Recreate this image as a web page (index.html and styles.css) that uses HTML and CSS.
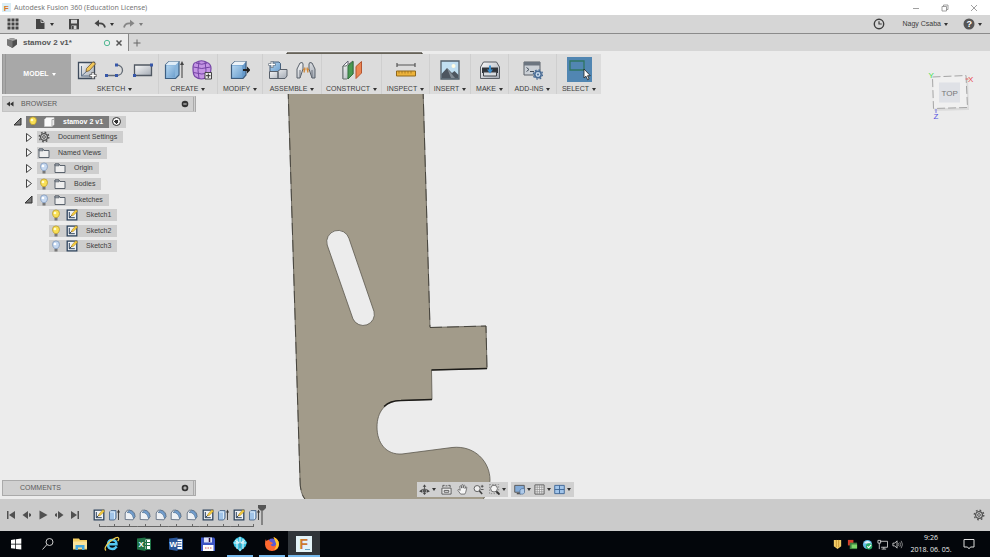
FILE: index.html
```html
<!DOCTYPE html>
<html lang="en">
<head>
<meta charset="utf-8">
<title>Autodesk Fusion 360 (Education License)</title>
<link rel="stylesheet" href="styles.css">
</head>
<body>
<svg class="defs" aria-hidden="true">
  <defs>
    <linearGradient id="blue" x1="0" y1="0" x2="1" y2="1"><stop offset="0" stop-color="#b5d6f0"/><stop offset="1" stop-color="#6c9fce"/></linearGradient>
    <linearGradient id="steel" x1="0" y1="0" x2="1" y2="1"><stop offset="0" stop-color="#fafafa"/><stop offset="1" stop-color="#a3aab4"/></linearGradient>
  </defs>
  <symbol id="i-sketch" viewBox="0 0 20 20"><path d="M1.500 2.500h16v16h-16z" fill="url(#steel)" stroke="#3e4b5c" stroke-width="1.300"/><path d="M4.500 6v10h9M4.500 16l9-8" fill="none" stroke="#61748c"/><path d="M9.500 8.500 16 1.800l2.600 2-6.300 6.900-3.300 1z" fill="#f1c85a" stroke="#705735" stroke-width=".8"/><path d="M16 12v7M12.500 15.500h7" stroke="#555" stroke-width="3"/><path d="M16 12.700v5.600M13.200 15.500h5.600" stroke="#fff" stroke-width="1.500"/></symbol>
  <symbol id="i-line" viewBox="0 0 20 20"><path d="M1.500 15.500h10c8 0 8-10.500 0-10.500" fill="none" stroke="#636b75" stroke-width="1.300"/><path d="M0 14h3v3H0zM10 14h3v3h-3zM10 3.500h3v3h-3z" fill="#3757a8"/></symbol>
  <symbol id="i-rect" viewBox="0 0 20 20"><path d="M1.500 5h17v10.500h-17z" fill="url(#steel)" stroke="#505862" stroke-width="1.300"/><path d="M0 14h3v3H0zM17 3.500h3v3h-3z" fill="#3757a8"/></symbol>
  <symbol id="i-box" viewBox="0 0 20 20"><path d="M1.500 5 5 1.500h10V15l-3.500 3.500h-10z" fill="#8ab6dc" stroke="#3e6083" stroke-width="1.200"/><path d="M1.500 5 5 1.500h10L11.500 5z" fill="#e0edf7"/><path d="M2.500 5.500h8.500v12H2.500z" fill="url(#blue)"/><path d="M18 18V3" stroke="#555" stroke-width="1.200"/><path d="m16 5 2-4 2 4z" fill="#444"/></symbol>
  <symbol id="i-form" viewBox="0 0 20 20"><path d="M4 2.500Q9.500-1 15 2.500q4 1.500 4 6t-2 8q-8 5-14 0-2-2-2-8t3-6z" fill="#c495e4" stroke="#7544a6" stroke-width="1.200"/><path d="M1.500 7q8 3 17 0M1.500 12.500q8 3 17 0M7 1.500q-2 9 0 17M13 1.500q2 9 0 17M4 3q6 2.500 11 0" fill="none" stroke="#7544a6"/><path d="M13 12.500h6.500v6.500H13z" fill="#eee" stroke="#444"/><path d="M14 15.700h4.500M16.300 13.500v4.500" stroke="#333"/></symbol>
  <symbol id="i-press" viewBox="0 0 20 20"><path d="M1.500 5 5 1.500h11V15l-3 3.500H1.500z" fill="#669acb" stroke="#3e5c7c" stroke-width="1.200"/><path d="M1.500 5 5 1.500h11L13 5z" fill="#edf3f8"/><path d="M2.200 5.500h10v12h-10z" fill="url(#blue)"/><path d="M13 9h4V6.500l3.500 3.500-3.500 3.500V11h-4z" fill="#222"/></symbol>
  <symbol id="i-newcomp" viewBox="0 0 20 20"><path d="m2 5 3-3h6l1.500 1.500V9L10 11.500H2z" fill="url(#blue)" stroke="#48617c"/><path d="M1.500 11.500h8.500v7H1.500zM10 11.500l2-2h7v6.500l-2 2.500h-7z" fill="url(#steel)" stroke="#59616b"/><path d="M4 1v7M.500 4.500h7" stroke="#4b5969" stroke-width="2.600"/><path d="M4 1.500v6M1 4.500h6" stroke="#fff" stroke-width="1.300"/></symbol>
  <symbol id="i-joint" viewBox="0 0 20 20"><path d="m1 9 3-6q3-1.500 3 1v5l-3 9H1zM19 9l-3-6q-3-1.500-3 1v5l3 9h3z" fill="url(#steel)" stroke="#59616b"/><path d="M4 10v8M16 10v8" stroke="#6c737c"/><path d="M7 9.500h2.500M10.500 9.500H13M8 12.500l1-5M12 12.500l-1-5" stroke="#d0893a" stroke-width="1.300"/></symbol>
  <symbol id="i-plane" viewBox="0 0 20 20"><path d="m1 6 5-5v13l-5 5z" fill="#f7f7f7" stroke="#667"/><path d="m4 6 7-5v13l-6.500 5H1V6z" fill="url(#steel)" stroke="#65716b"/><path d="m6 6 5-4.500V14l-5 5z" fill="#4a9a52" stroke="#31713c"/><path d="m14 6.500 5.500-5V13L14 18.500z" fill="#ec8552" stroke="#b55530"/></symbol>
  <symbol id="i-measure" viewBox="0 0 20 20"><path d="M1 5h18M1 3v4M19 3v4" stroke="#555" stroke-width="1.200"/><path d="M.500 11h19v5H.500z" fill="#edb33a" stroke="#90681c"/><path d="M3 11v2.500m3-2.500v2.500m3-2.500v2.500m3-2.500v2.500m3-2.500v2.500" stroke="#90681c" stroke-width=".7"/></symbol>
  <symbol id="i-image" viewBox="0 0 20 20"><path d="M1 1h18v18H1z" fill="#c0dff1" stroke="#53616c" stroke-width="1.300"/><circle cx="13.500" cy="6" r="2" fill="#fffde4"/><path d="m1.500 14 5.500-6 5 5 2.500-2 4 4v3.500h-17z" fill="#4d5660"/><path d="m7 8 8 10h-4z" fill="#818b94"/></symbol>
  <symbol id="i-make" viewBox="0 0 20 20"><path d="M3.500 2h13l3 5v11.500H.500V7z" fill="url(#steel)" stroke="#5a5f65"/><path d="M2 7.500h16V13H2z" fill="#30353b"/><path d="M3.500 12h13v4h-13z" fill="#d8dce0" stroke="#40454b"/><path d="M10 5.500v5" stroke="#3b8fd0" stroke-width="2"/><path d="m7 9.500 3 4 3-4z" fill="#3b8fd0"/></symbol>
  <symbol id="i-addin" viewBox="0 0 20 20"><path d="M1 2h16v13H1z" fill="#cbd0d6" stroke="#5b6168"/><path d="M1 2h16v3.500H1z" fill="#6c7580"/><path d="m3.500 7.500 2.500 2-2.500 2M7 11.500h4" fill="none" stroke="#44505d"/><circle cx="15" cy="14.500" r="3.200" fill="#c5d8eb" stroke="#486b94" stroke-width="1.500"/><circle cx="15" cy="14.500" r="4.600" fill="none" stroke="#486b94" stroke-width="1.300" stroke-dasharray="1.700 1.900"/><circle cx="15" cy="14.500" r="1" fill="#486b94"/></symbol>
  <symbol id="i-select" viewBox="0 0 25 25"><path d="M3 4h14v9H3z" fill="none" stroke="#2f7561" stroke-width="1.300"/><path d="M17 12v9l2-1.800 1.600 3.600 1.500-.8-1.600-3.300h2.800z" fill="#fff" stroke="#222" stroke-width=".8"/></symbol>
  <symbol id="i-bulb-on" viewBox="0 0 12 12"><path d="M4.500 8.500Q2.500 6.500 2.500 4.400a3.500 3.500 0 0 1 7 0q0 2.100-2 4.100z" fill="#f9df54" stroke="#b99a2c" stroke-width=".8"/><circle cx="5" cy="4" r="1.300" fill="#fffbd0"/><path d="M4.500 9h3v2.500h-3z" fill="#777"/></symbol>
  <symbol id="i-bulb-off" viewBox="0 0 12 12"><path d="M4.500 8.500Q2.500 6.500 2.500 4.400a3.500 3.500 0 0 1 7 0q0 2.100-2 4.100z" fill="#c5d8f0" stroke="#7f98bd" stroke-width=".8"/><circle cx="5" cy="4" r="1.300" fill="#fff"/><path d="M4.500 9h3v2.500h-3z" fill="#777"/></symbol>
  <symbol id="i-folder" viewBox="0 0 12 12"><path d="M1 2h4l1 1.500h5v7H1z" fill="#eee" stroke="#4d5661" stroke-width=".9"/><path d="M1 2h4v1.800H1z" fill="#aab0b7" stroke="#4d5661" stroke-width=".7"/></symbol>
  <symbol id="i-cubew" viewBox="0 0 12 12"><path d="M1.500 3.500 3.500 1.500H11V8.500l-2 2H1.500z" fill="#fafafa" stroke="#ccc" stroke-width=".7"/><path d="M9 3.500h2M9 3.500v7" stroke="#aaa"/></symbol>
  <symbol id="i-gear" viewBox="0 0 12 12"><circle cx="6" cy="6" r="3.400" fill="none" stroke="#505050" stroke-width="1.300"/><circle cx="6" cy="6" r="4.800" fill="none" stroke="#505050" stroke-width="1.300" stroke-dasharray="1.700 2.070"/><circle cx="6" cy="6" r="1.400" fill="none" stroke="#505050" stroke-width=".9"/></symbol>
  <symbol id="i-sk" viewBox="0 0 12 12"><path d="M1.200 1.200h9.600v9.600H1.200z" fill="#eef1f4" stroke="#2e445e" stroke-width="1.300"/><path d="M3.300 3v5.700h5.500M3.300 8.700l4-4" fill="none" stroke="#2e445e"/><path d="m5.300 7 .7-2L9.800.700l1.900 1.400L7.500 6.200z" fill="#f6ce3c" stroke="#a07721" stroke-width=".5"/></symbol>
  <symbol id="i-ext" viewBox="0 0 12 12"><path d="M1.500 3 3 1.500h5V9L6.500 11h-5z" fill="#a1c4e8" stroke="#506c8c" stroke-width=".9"/><path d="M2 3h4.500v7" fill="none" stroke="#dcecf9"/><path d="M10.500 11V2.500" stroke="#444"/><path d="m9 3.500 1.500-3 1.500 3z" fill="#333"/></symbol>
  <symbol id="i-fil" viewBox="0 0 12 12"><path d="M1.200 10.500V4l2-2.800h2.600Q11 2 11 7.500L9 10.800z" fill="#eef1f5" stroke="#637082" stroke-width=".9"/><path d="M3 3.500q5-.5 6.500 6l1.300-2Q10 2 5.500 1.300z" fill="#739fd0" stroke="#496989" stroke-width=".6"/></symbol>
  <symbol id="i-open" viewBox="0 0 9 9"><path d="M8 1v7H1z" fill="#777" stroke="#333"/></symbol>
  <symbol id="i-closed" viewBox="0 0 9 9"><path d="M2.500.500 7.500 4.500 2.500 8.500z" fill="#f5f5f5" stroke="#444"/></symbol>
</svg>

<header class="titlebar">
  <svg class="logo" viewBox="0 0 10 10"><path d="M0 0h10v10H0z" fill="#d9edf6"/><text x="2" y="9" class="logo-f">F</text></svg>
  <span class="title">Autodesk Fusion 360 (Education License)</span>
  <div class="winbtns">
    <button aria-label="Minimize"><svg viewBox="0 0 8 8"><path d="M1 4.500h6"/></svg></button>
    <button aria-label="Restore"><svg viewBox="0 0 8 8"><path d="M1 2.500h4.500V7H1zM2.500 2.500V1H7v4.500H5.500"/></svg></button>
    <button aria-label="Close"><svg viewBox="0 0 8 8"><path d="m1 1 6 6M7 1 1 7"/></svg></button>
  </div>
</header>

<nav class="appbar" aria-label="Application">
  <button aria-label="Data panel" class="ab-grid"><svg viewBox="0 0 12 12"><path d="M.500.500h3v3h-3zm4 0h3v3h-3zm4 0h3v3h-3zm-8 4h3v3h-3zm4 0h3v3h-3zm4 0h3v3h-3zm-8 4h3v3h-3zm4 0h3v3h-3zm4 0h3v3h-3z" fill="#444"/></svg></button>
  <button aria-label="File" class="caret"><svg viewBox="0 0 12 12"><path d="M2 1h5l3.500 3.500V11H2z" fill="#444"/><path d="M7 1v3.500h3.500" fill="none" stroke="#ddd" stroke-width=".8"/></svg></button>
  <button aria-label="Save"><svg viewBox="0 0 12 12"><path d="M1 1h10v10.300H1z" fill="#444"/><path d="M3 1.800h6v3.700H3zM3.500 7.500h5V11h-5z" fill="#d5d5d5"/><path d="M4 8h1.700v3H4z" fill="#444"/></svg></button>
  <button aria-label="Undo" class="caret"><svg viewBox="0 0 12 12"><path d="M4 5.500q6-1 7 4" fill="none" stroke="#444" stroke-width="1.800"/><path d="M.500 5.300 5 1.800v7z" fill="#444"/></svg></button>
  <button aria-label="Redo" class="caret faded"><svg viewBox="0 0 12 12"><path d="M8 5.500q-6-1-7 4" fill="none" stroke="#444" stroke-width="1.800"/><path d="M11.500 5.300 7 1.800v7z" fill="#444"/></svg></button>
  <div class="account">
    <button aria-label="Job status"><svg viewBox="0 0 12 12"><circle cx="6" cy="6" r="4.700" fill="none" stroke="#3d3d3d" stroke-width="1.400"/><path d="M6 3.200V6h2.800" fill="none" stroke="#3d3d3d" stroke-width="1.200"/></svg></button>
    <button class="caret user">Nagy Csaba</button>
    <button aria-label="Help" class="caret"><svg viewBox="0 0 12 12"><circle cx="6" cy="6" r="5.500" fill="#555"/><text x="3.500" y="9.200" class="q">?</text></svg></button>
  </div>
</nav>

<div class="tabs">
  <div class="tab">
    <svg class="ic" viewBox="0 0 12 12"><path d="m1 2.500 5-1.500 5 1.500v5L6.500 11 1 8z" fill="#4e4e4e"/><path d="m1 2.500 5.500 1.500L11 2.500 6 1z" fill="#a2a2a2"/><path d="M6.500 4v7L1 8V2.500z" fill="#777"/></svg>
    <strong>stamov 2 v1*</strong>
    <svg class="sync" viewBox="0 0 8 8"><circle cx="4" cy="4" r="2.700" fill="none" stroke="#53b994"/></svg>
    <button aria-label="Close tab"><svg viewBox="0 0 8 8"><path d="m1.500 1.500 5 5M6.500 1.500l-5 5" stroke="#555" stroke-width="1.500"/></svg></button>
  </div>
  <button class="newtab" aria-label="New tab"><svg viewBox="0 0 8 8"><path d="M4 .500v7M.500 4h7" stroke="#666"/></svg></button>
</div>

<main class="viewport">
  <svg class="model" viewBox="0 51 990 448" preserveAspectRatio="xMinYMin slice" role="img" aria-label="Part, top view">
    <path fill-rule="evenodd" d="M287 53H422L430 327.500 486 326 487 368.500 431.500 370 432 399.500 401 400.500C385 401 377 412 377 427C377 443 386 455 402 454L452 447.500C475 445 490 462 490 480Q490 490 483 499.500H305Q300 493 300 480ZM327.200 245A11.200 11.200 0 0 1 349 238.500L374 311.500A11.200 11.200 0 0 1 353 319Z" fill="#a29b8a" stroke="#5c584e" stroke-width=".8"/>
    <path d="M287 53H422" fill="none" stroke="#4a473f" stroke-width="1.200"/>
    <path d="M422 53l8 274M287 53l13 427q0 13 5 19M430 327.500l56-1.500 1 42.500" fill="none" stroke="#34322d" stroke-width=".7" stroke-dasharray="12 5"/>
    <path d="m487 368.500-55.500 1.500M432 399.500l-31 1q-11 0-17 6" fill="none" stroke="#1c1b18" stroke-width="1.300"/>
  </svg>

  <div class="toolbar" role="toolbar" aria-label="Model tools">
    <button class="workspace caret">MODEL</button>
    <div class="group"><div class="icons"><svg><use href="#i-sketch"/></svg><svg><use href="#i-line"/></svg><svg><use href="#i-rect"/></svg></div><button class="caret">SKETCH</button></div>
    <div class="group"><div class="icons"><svg><use href="#i-box"/></svg><svg><use href="#i-form"/></svg></div><button class="caret">CREATE</button></div>
    <div class="group"><div class="icons"><svg><use href="#i-press"/></svg></div><button class="caret">MODIFY</button></div>
    <div class="group"><div class="icons"><svg><use href="#i-newcomp"/></svg><svg><use href="#i-joint"/></svg></div><button class="caret">ASSEMBLE</button></div>
    <div class="group"><div class="icons"><svg><use href="#i-plane"/></svg></div><button class="caret">CONSTRUCT</button></div>
    <div class="group"><div class="icons"><svg><use href="#i-measure"/></svg></div><button class="caret">INSPECT</button></div>
    <div class="group"><div class="icons"><svg><use href="#i-image"/></svg></div><button class="caret">INSERT</button></div>
    <div class="group"><div class="icons"><svg><use href="#i-make"/></svg></div><button class="caret">MAKE</button></div>
    <div class="group"><div class="icons"><svg><use href="#i-addin"/></svg></div><button class="caret">ADD-INS</button></div>
    <div class="group"><div class="icons active"><svg><use href="#i-select"/></svg></div><button class="caret">SELECT</button></div>
  </div>

  <section class="panel">
    <svg class="rewind" viewBox="0 0 8 8"><path d="M4 1.500v5L.500 4zM7.500 1.500v5L4 4z" fill="#333"/></svg>
    <h2>BROWSER</h2>
    <button aria-label="Collapse"><svg viewBox="0 0 8 8"><circle cx="4" cy="4" r="3.300" fill="#333"/><path d="M2.300 4h3.400" stroke="#ddd"/></svg></button>
  </section>
  <ul class="tree">
    <li class="root"><svg class="arrow"><use href="#i-open"/></svg><span class="chip dark"><svg><use href="#i-bulb-on"/></svg><svg><use href="#i-cubew"/></svg><b>stamov 2 v1</b></span><span class="radio"><input type="radio" checked aria-label="Activate component"></span></li>
    <li><svg class="arrow"><use href="#i-closed"/></svg><span class="chip"><svg><use href="#i-gear"/></svg><b>Document Settings</b></span></li>
    <li><svg class="arrow"><use href="#i-closed"/></svg><span class="chip"><svg><use href="#i-folder"/></svg><b>Named Views</b></span></li>
    <li><svg class="arrow"><use href="#i-closed"/></svg><span class="chip"><svg><use href="#i-bulb-off"/></svg><svg><use href="#i-folder"/></svg><b>Origin</b></span></li>
    <li><svg class="arrow"><use href="#i-closed"/></svg><span class="chip"><svg><use href="#i-bulb-on"/></svg><svg><use href="#i-folder"/></svg><b>Bodies</b></span></li>
    <li><svg class="arrow"><use href="#i-open"/></svg><span class="chip"><svg><use href="#i-bulb-off"/></svg><svg><use href="#i-folder"/></svg><b>Sketches</b></span></li>
    <li class="leaf"><span class="chip"><svg><use href="#i-bulb-on"/></svg><svg><use href="#i-sk"/></svg><b>Sketch1</b></span></li>
    <li class="leaf"><span class="chip"><svg><use href="#i-bulb-on"/></svg><svg><use href="#i-sk"/></svg><b>Sketch2</b></span></li>
    <li class="leaf"><span class="chip"><svg><use href="#i-bulb-off"/></svg><svg><use href="#i-sk"/></svg><b>Sketch3</b></span></li>
  </ul>
  <section class="panel comments">
    <h2>COMMENTS</h2>
    <button aria-label="Add comment"><svg viewBox="0 0 8 8"><circle cx="4" cy="4" r="3.300" fill="#333"/><path d="M2.300 4h3.400M4 2.300v3.400" stroke="#ddd"/></svg></button>
  </section>

  <svg class="viewcube" viewBox="0 0 50 54" role="img" aria-label="View cube">
    <path d="m8 8 35-1 1 32-35 1z" fill="#000" opacity=".07"/>
    <path d="m7.500 6 33.500-1.500 1.500 32-34 1z" fill="#f0f0f0" stroke="#a5a5a5" stroke-dasharray="8 3"/>
    <path d="M14 11.500h21v20H14z" fill="#dfe1e6"/>
    <path d="M40.500 8h3" stroke="#e86464"/><path d="M11 38v4" stroke="#7777e2"/>
    <text x="16.500" y="24.500" class="face">TOP</text><text x="43" y="11" fill="#e8474d">X</text><text x="3.500" y="7" fill="#3fe045">Y</text><text x="8.500" y="47.500" fill="#514ee0">Z</text>
  </svg>

  <div class="navbar" role="toolbar" aria-label="Navigation">
    <div>
      <button class="caret" aria-label="Orbit"><svg viewBox="0 0 12 12"><path d="M6 1v10M1.500 7.500q4.500-4 9 0" fill="none" stroke="#555"/><path d="m4 3 2-2.500L8 3zM4 9.500 6 12l2-2.500zM0 8l3.500-2v3.500zM12 8 8.500 6v3.500z" fill="#444"/><path d="M4 6h4v3H4z" fill="#555"/></svg></button>
      <button aria-label="Look at"><svg viewBox="0 0 12 12"><path d="M1 4.500h10V11H1zM3.500 7h5v2h-5z" fill="#eee" stroke="#555"/><path d="M2 3.500V1.500h2m4 0h2v2M5 2h2" fill="none" stroke="#555"/></svg></button>
      <button aria-label="Pan"><svg viewBox="0 0 12 12"><path d="M4 11 1 7q0-1.500 1.500-.7L3.500 7 3 2.500q.7-1 1.500 0l.4 2L5.200 1q.8-.8 1.500 0v3.500L7.500 1.700q.8-.8 1.400.3L8.700 5l1-1.700q1-.3 1 .8L9.500 9l-1 2z" fill="#f5f5f5" stroke="#555" stroke-width=".8"/></svg></button>
      <button aria-label="Zoom"><svg viewBox="0 0 12 12"><circle cx="4.500" cy="5" r="3.300" fill="#eee" stroke="#555"/><path d="m7 7.500 3 3.500" stroke="#444" stroke-width="1.700"/><path d="M8.500 2.500h3M10 1v3M8.500 6h3" stroke="#444" stroke-width=".9"/></svg></button>
      <button class="caret" aria-label="Fit"><svg viewBox="0 0 12 12"><path d="M.500.500h10v10H.500z" fill="none" stroke="#888" stroke-dasharray="1.500 1.500"/><circle cx="5.500" cy="5" r="3.700" fill="#f4f4f4" stroke="#666"/><path d="m8 8 3.500 3.500" stroke="#333" stroke-width="2"/></svg></button>
    </div>
    <div>
      <button class="caret" aria-label="Display settings"><svg viewBox="0 0 12 12"><path d="M.800 1.500h10.400V9H.800z" fill="#83abd8" stroke="#555"/><path d="M3 10.500h4.500" stroke="#555" stroke-width="1.500"/><path d="m6.500 6.500 2-1.500h3v4.500L10 11H6.500z" fill="#aecae9" stroke="#496b94" stroke-width=".7"/></svg></button>
      <button class="caret" aria-label="Grid and snaps"><svg viewBox="0 0 12 12"><path d="M1 1h10v10H1z" fill="#eee" stroke="#555"/><path d="M3.500 1v10M6 1v10M8.500 1v10M1 3.500h10M1 6h10M1 8.500h10" stroke="#888" stroke-width=".7"/></svg></button>
      <button class="caret" aria-label="Viewports"><svg viewBox="0 0 12 12"><path d="M.800 1.500h10.400v9H.800z" fill="#a2c5ea" stroke="#3d6695"/><path d="M6 1.500v9M.800 6h10.400" stroke="#3d6695"/></svg></button>
    </div>
  </div>
</main>

<section class="timeline" aria-label="Timeline">
  <div class="playback">
    <button aria-label="First"><svg viewBox="0 0 10 10"><path d="M1 1h1.500v8H1zM9 1v8L3 5z"/></svg></button>
    <button aria-label="Step back"><svg viewBox="0 0 10 10"><path d="M6 1v8L.500 5zM7 3l2 1v2L7 7z"/></svg></button>
    <button aria-label="Play"><svg viewBox="0 0 10 10"><path d="m1.500.500 8 4.500-8 4.500z"/></svg></button>
    <button aria-label="Step forward"><svg viewBox="0 0 10 10"><path d="M4 1v8l5.500-4zM3 3 1 4v2l2 1z"/></svg></button>
    <button aria-label="Last"><svg viewBox="0 0 10 10"><path d="M7.500 1H9v8H7.500zM1 1v8l6-4z"/></svg></button>
  </div>
  <ol class="features">
    <li><svg><use href="#i-sk"/></svg></li><li><svg><use href="#i-ext"/></svg></li><li><svg><use href="#i-fil"/></svg></li><li><svg><use href="#i-fil"/></svg></li><li><svg><use href="#i-fil"/></svg></li><li><svg><use href="#i-fil"/></svg></li><li><svg><use href="#i-fil"/></svg></li><li><svg><use href="#i-sk"/></svg></li><li><svg><use href="#i-ext"/></svg></li><li><svg><use href="#i-sk"/></svg></li><li><svg><use href="#i-ext"/></svg></li>
  </ol>
  <svg class="marker" viewBox="0 0 8 22"><path d="M0 1h8v3L5.500 6.500h-3L0 4z" fill="#555"/><path d="M4 5v16" stroke="#555" stroke-width="1.200"/></svg>
  <button class="settings" aria-label="Timeline settings"><svg><use href="#i-gear"/></svg></button>
</section>

<footer class="taskbar">
  <button aria-label="Start"><svg viewBox="0 0 16 16"><path d="m3 4 4.300-.7v4.400H3zM8 3.200 13.300 2.500v5.200H8zM3 8.400h4.300v4.400L3 12.200zM8 8.400h5.300v5.200L8 12.900z" fill="#fff"/></svg></button>
  <button aria-label="Search"><svg viewBox="0 0 16 16"><circle cx="9.500" cy="6" r="3.500" fill="none" stroke="#ccc"/><path d="m7 8.500-4.500 5" stroke="#ccc"/></svg></button>
  <button aria-label="File Explorer"><svg viewBox="0 0 16 16"><path d="M1 2.500h6l1 1.500h7v9.500H1z" fill="#f4ce63"/><path d="M1 5.500h14v7H1z" fill="#fbe39a"/><path d="M3.500 14V9h9v5h-2.500v-2.500H6V14z" fill="#45a6dc"/></svg></button>
  <button aria-label="Internet Explorer"><svg viewBox="0 0 16 16"><path d="M12.700 10.500Q11 13 8.300 13 4 13 4 8.500T8.300 4q4.200 0 4.200 4.300H4.500" fill="none" stroke="#54c7f2" stroke-width="2.400"/><path d="M2 14.500Q-1 12 6 5.500 13 0 14.500 2q.8 1.200-.8 3" fill="none" stroke="#f2ce4b" stroke-width="1.200"/></svg></button>
  <button aria-label="Excel"><svg viewBox="0 0 16 16"><path d="M8 3h6.500v10.500H8z" fill="#fff" stroke="#1f7145"/><path d="M10.500 4v9m-2-6.500h6m-6 3h6" stroke="#1f7145"/><path d="m1 2.500 8.500-1v13.500L1 13.500z" fill="#1f7145"/><text x="2.500" y="11" class="tile">X</text></svg></button>
  <button aria-label="Word"><svg viewBox="0 0 16 16"><path d="M8 3h6.500v10.500H8z" fill="#fff" stroke="#2b579a"/><path d="M9 5.500h4.500M9 8h4.500M9 10.500h4.500" stroke="#2b579a"/><path d="m1 2.500 8.500-1v13.500L1 13.500z" fill="#2b579a"/><text x="1.500" y="11" class="tile">W</text></svg></button>
  <button aria-label="Total Commander"><svg viewBox="0 0 16 16"><path d="M1 1.500h13l1 1v12.500H1z" fill="#3d54c4"/><path d="M4 1.500h8v5H4z" fill="#dfe3f5"/><path d="M9.500 2v4" stroke="#314" stroke-width="1.500"/><path d="M3 9h10.500v6H3z" fill="#fff"/><path d="M5 12h6.500" stroke="#c55" stroke-dasharray="1.500 1"/></svg></button>
  <button class="open" aria-label="3D tools"><svg viewBox="0 0 16 16"><path d="M4 2.500 8 .500l4 2 3 4-1.500 4L10 13.500 8 15.500 6 13.500 2.500 10.500 1 6.500z" fill="#37c3e4"/><path d="M8 1v14M5 3v10M11 3v10M2 7h12M3 4.500 8 7l5-2.500" fill="none" stroke="#fff" stroke-width=".9"/><path d="M8 6.500v6" stroke="#137a9a" stroke-width="1.200"/></svg></button>
  <button class="open" aria-label="Firefox"><svg viewBox="0 0 16 16"><circle cx="8.300" cy="7.500" r="5" fill="#5a5bd5"/><path d="M2 3q0 1 .5 2L4.500 3.500 6 5.500 9 7Q8 8.500 6.500 8.500q1 2.500 4 1.500 3-2 1-5.500L9.500 1q5.500 2 5.500 7.500Q14.500 15 8 15T1 8.500Q.700 5 2 3z" fill="#ff6930"/><path d="M9.500 1q5.500 2 5.500 7.500Q14 13 10 14q3.500-4 1.500-8z" fill="#ffc72d"/></svg></button>
  <button class="open current" aria-label="Fusion 360"><svg viewBox="0 0 16 16"><path d="M0 0h16v16H0z" fill="#e3f3f8"/><text x="3.500" y="13" class="big-f">F</text><path d="M9 13.500h5" stroke="#62a4c6"/></svg></button>
  <div class="tray">
    <svg viewBox="0 0 12 12"><path d="M2 1h8v7l-4 3-4-3z" fill="#f4ce69"/><path d="M4.700 1v8M7.300 1v8" stroke="#b88224" stroke-width=".8"/></svg>
    <svg viewBox="0 0 12 12"><path d="M1 1h6v6H1z" fill="#d53d2b"/><path d="M3 4h8v7H3z" fill="#3d8240"/><path d="M5 6h6v4H5z" fill="#7dd76b"/></svg>
    <svg viewBox="0 0 12 12"><circle cx="6" cy="6" r="5" fill="#62bae5"/><path d="M2 4.500Q6 0 10 4.500L6 5z" fill="#e3f2fa"/><circle cx="7.700" cy="8" r="3.500" fill="#2aad68"/><path d="m5.800 8 1.500 1.500L10 6.500" fill="none" stroke="#fff" stroke-width="1.200"/></svg>
    <svg viewBox="0 0 12 12"><path d="M3.500 2.500h8v6.500h-7M7.500 9v2M5 11h5M1 1.500h3v3H1zM2.500 4.500V11" fill="none" stroke="#ddd" stroke-width=".9"/></svg>
    <svg viewBox="0 0 12 12"><path d="M1 4.500h2L5.500 2v8L3 7.500H1z" fill="none" stroke="#ddd" stroke-width=".9"/><path d="M7 4.500q1 1.500 0 3M8.500 3.500q2 2.500 0 5M10 2q3 4 0 8" fill="none" stroke="#aaa" stroke-width=".8"/></svg>
  </div>
  <time class="clock"><span>9:26</span><span>2018. 06. 05.</span></time>
  <button class="notice" aria-label="Notifications"><svg viewBox="0 0 12 12"><path d="M1 1.500h10v7.500H7.500L6 10.800 4.500 9H1z" fill="none" stroke="#ddd"/></svg></button>
</footer>
</body>
</html>
```
FILE: styles.css
```css
* { box-sizing: border-box; }

body {
  margin: 0;
  height: 100vh;
  display: flex;
  flex-direction: column;
  overflow: hidden;
  background: #ececec;
  color: #3c3c3c;
  font: 7px/10px "Liberation Sans", Arial, sans-serif;
}

button {
  display: flex;
  align-items: center;
  justify-content: center;
  padding: 0;
  border: 0;
  background: none;
  color: inherit;
  font: inherit;
}

svg { display: block; flex: none; width: 12px; height: 12px; }
.defs { position: absolute; width: 0; height: 0; }

.caret::after {
  content: "";
  margin-left: 3px;
  border: 2px solid transparent;
  border-top: 3px solid #333;
  border-bottom: 0;
}

/* Title bar */
.titlebar {
  display: flex;
  align-items: center;
  gap: 3px;
  height: 15px;
  padding-left: 2px;
  background: #fff;
  color: #777;
}
.logo { width: 9px; height: 9px; }
.logo-f { font: bold 9px "Liberation Sans", sans-serif; fill: #d97822; }
.title { font: 7px/12px "Noto Sans", sans-serif; }
.winbtns { display: flex; margin-left: auto; padding-right: 2px; }
.winbtns button { width: 29px; }
.winbtns svg { width: 8px; height: 8px; fill: none; stroke: #888; stroke-width: .8; }

/* Application bar */
.appbar {
  display: flex;
  align-items: center;
  gap: 17px;
  height: 19px;
  padding: 0 8px 0 7px;
  background: #d6d6d6;
  border-bottom: 1px solid #8b8b8b;
}
.faded { opacity: .55; }
.appbar > .caret { gap: 1px; }
.appbar > .caret + .caret { margin-left: -8px; }
.ab-grid + .caret { margin-left: -2px; }
.appbar > .caret + button:not(.caret) { margin-left: -3px; }
.appbar > button:not(.caret) + .caret:not(:nth-child(2)) { margin-left: -3px; }
.account { display: flex; align-items: center; gap: 17px; margin-left: auto; }
.account .user + .caret { margin-left: -2px; }
.q { font: bold 9px "Liberation Sans", sans-serif; fill: #fff; }

/* Document tabs */
.tabs { display: flex; height: 17px; background: #d6d6d6; }
.tab {
  display: flex;
  align-items: center;
  width: 129px;
  padding: 0 5px 0 6px;
  background: #ececec;
  border-right: 1px solid #888;
}
.tab strong { margin-left: 5px; font-size: 8px; color: #555; }
.tab .sync { width: 8px; height: 8px; margin-left: auto; }
.tab button { margin-left: 4px; }
.tab button svg { width: 8px; height: 8px; }
.newtab { width: 16px; }
.newtab svg { width: 8px; height: 8px; }

/* Viewport */
.viewport {
  position: relative;
  flex: 1;
  min-height: 0;
  display: flex;
  flex-direction: column;
  align-items: flex-start;
  padding: 3px 2px;
}
.viewport > * { position: relative; }
.viewport > .model { position: absolute; inset: 0; width: 100%; height: 100%; }

.toolbar {
  display: grid;
  grid-template-columns: 69px 87px 59px 45px 59px 60px 48px 41px 38px 48px 45px;
  height: 40px;
  margin-bottom: 2px;
  background: #dcdcdc;
}
.workspace {
  padding-left: 2px;
  background: #a8a8a8;
  border-left: 4px double #969696;
  color: #fff;
  font-weight: bold;
}
.workspace.caret::after { border-top-color: #fff; }
.group {
  display: flex;
  flex-direction: column;
  align-items: center;
  justify-content: space-between;
  padding: 3px 0 0;
}
.group + .group { border-left: 1px solid #cfcfcf; }
.icons { display: flex; gap: 8px; height: 25px; align-items: center; }
.icons svg { width: 20px; height: 20px; }
.icons.active { background: #5186b2; }
.icons.active svg { width: 25px; height: 25px; }

.panel {
  display: flex;
  align-items: center;
  width: 194px;
  height: 16px;
  padding: 0 4px 0 3px;
  background: #d0d0d0;
  border: 1px solid #c3c3c3;
  border-right: 3px double #aaa;
}
.panel h2 { margin: 0 auto 0 7px; font: inherit; color: #5a5a5a; }
.panel svg { width: 8px; height: 8px; }
.comments { margin-top: auto; border-color: #aaa; }
.comments h2 { margin-left: 14px; }

.tree {
  display: grid;
  grid-auto-rows: 1fr;
  height: 140px;
  margin: 2px 0 0;
  padding: 0;
  list-style: none;
}
.tree li { display: flex; align-items: center; padding-left: 22px; }
.tree .root { padding-left: 11px; }
.tree .leaf { padding-left: 47px; }
.arrow { width: 9px; height: 9px; margin-right: 4px; }
.chip {
  display: flex;
  align-items: center;
  gap: 4px;
  height: 12px;
  padding: 0 6px 0 1px;
  background: #cecece;
}
.chip b { margin-left: 4px; font-weight: normal; }
.chip.dark { background: #7c7c7c; color: #fff; }
.chip.dark b { font-weight: bold; }
.radio { display: flex; align-items: center; height: 12px; padding: 0 5px 0 3px; background: #cecece; }
.radio input {
  appearance: none;
  width: 9px;
  height: 9px;
  margin: 0;
  border: 1px solid #333;
  border-radius: 50%;
  background: radial-gradient(#333 0 2px, #f5f5f5 2px);
}

.viewport > .viewcube {
  position: absolute;
  top: 20px;
  right: 15px;
  width: 50px;
  height: 54px;
  font: 8px "Liberation Sans", sans-serif;
}
.face { font: 8px "Liberation Sans", sans-serif; fill: #777; }

.viewport > .navbar {
  position: absolute;
  right: 0;
  bottom: 2px;
  left: 0;
  display: flex;
  justify-content: center;
  gap: 3px;
}
.navbar div { display: flex; align-items: center; gap: 5px; height: 15px; padding: 0 2px; background: #d0d0d0; }
.navbar svg { width: 11px; height: 11px; }
.navbar .caret::after { margin-left: 2px; }
.navbar div + div { gap: 3px; padding: 0 3px; }

/* Timeline */
.timeline {
  display: flex;
  align-items: center;
  height: 32px;
  padding: 0 5px 0 3px;
  background: #cbcbcb;
}
.playback { display: flex; }
.playback button { width: 16px; }
.playback svg { width: 10px; height: 10px; fill: #505050; }
.features {
  display: grid;
  grid-auto-flow: column;
  grid-auto-columns: 1fr;
  width: 171px;
  height: 24px;
  margin: 0 0 0 8px;
  padding: 0;
  list-style: none;
}
.features li {
  display: flex;
  flex-direction: column;
  align-items: center;
  justify-content: space-between;
  padding-top: 6px;
}
.features li::after {
  content: "";
  width: 100%;
  height: 3px;
  background: linear-gradient(#666, #666) center / 1px 100% no-repeat, linear-gradient(#666, #666) bottom / 100% 1px no-repeat;
}
.features li:first-child::after { width: 50%; align-self: flex-end; background-position: left, bottom; }
.features li:last-child::after { width: 50%; align-self: flex-start; background-position: right, bottom; }
.marker { width: 8px; height: 22px; margin-left: -4px; }
.settings { margin-left: auto; }

/* Taskbar */
.taskbar { display: flex; height: 26px; background: #03060b; color: #eee; }
.taskbar > button { width: 32px; border: solid transparent; border-width: 2px 0; }
.taskbar > button svg { width: 16px; height: 16px; }
.taskbar > .open {
  background: linear-gradient(#76b9ed, #76b9ed) center bottom / 26px 2px no-repeat border-box;
}
.taskbar > .current { background-color: #30353a; background-size: 100% 2px; }
.tile { font: bold 8px "Liberation Sans", sans-serif; fill: #fff; }
.big-f { font: bold 14px "Liberation Sans", sans-serif; fill: #cd7a30; }
.tray { display: flex; align-items: center; gap: 4px; margin-left: auto; }
.tray svg { width: 11px; height: 11px; }
.clock {
  display: flex;
  flex-direction: column;
  justify-content: center;
  align-items: center;
  width: 56px;
  font: 7px/12px "Open Sans", sans-serif;
}
.taskbar > .notice { width: 20px; margin-right: 11px; }
.taskbar > .notice svg { width: 12px; height: 12px; }
```
